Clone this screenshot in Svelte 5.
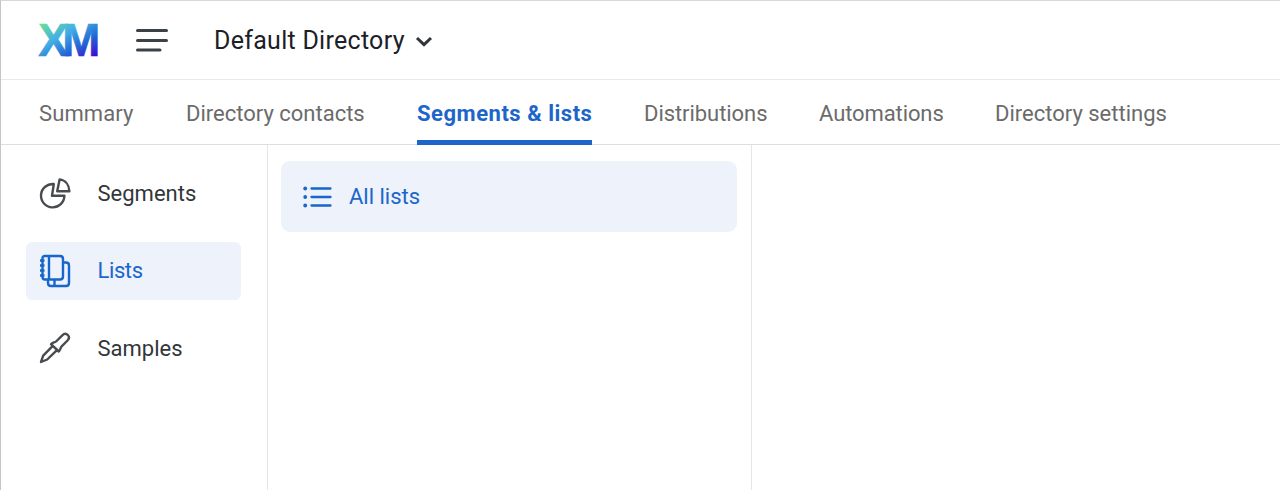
<script>
  const tabs = [
    { label: 'Summary', width: 95, spacing: 0.1 },
    { label: 'Directory contacts', width: 179, spacing: 0 },
    { label: 'Segments & lists', width: 175, spacing: 0.52, active: true },
    { label: 'Distributions', width: 123, spacing: -0.06 },
    { label: 'Automations', width: 124, spacing: -0.1 },
    { label: 'Directory settings', width: 173, spacing: 0 }
  ];
</script>

<div class="app">
  <header>
    <svg class="logo" width="68" height="44" viewBox="0 0 68 44" role="img" aria-label="XM">
      <defs>
        <linearGradient id="brand" gradientUnits="userSpaceOnUse" x1="2" y1="5" x2="32" y2="54">
          <stop offset="0" stop-color="#69e394" />
          <stop offset=".38" stop-color="#43aee6" />
          <stop offset=".68" stop-color="#246bd4" />
          <stop offset="1" stop-color="#3c08cf" />
        </linearGradient>
      </defs>
      <text x="0.2" y="37.500" textLength="62" lengthAdjust="spacing" fill="url(#brand)" stroke="url(#brand)" stroke-width=".7">XM</text>
    </svg>
    <svg class="menu" width="34" height="26" viewBox="0 0 34 26">
      <path d="M2.500 3.500H31.500M2.500 13.500H31.500M2.500 23H25" />
    </svg>
    <button class="directory">
      <span>Default Directory</span>
      <svg width="18" height="13" viewBox="0 0 18 13"><path d="M2 3L9 9.700L16 3" /></svg>
    </button>
  </header>

  <nav class="tabs">
    {#each tabs as tab}
      <button class="tab" class:active={tab.active} style="width:{tab.width}px;letter-spacing:{tab.spacing}px">{tab.label}</button>
    {/each}
  </nav>

  <main>
    <aside>
      <button class="item">
        <svg width="34" height="34" viewBox="0 0 34 34">
          <path d="M15.800 8A11.700 11.700 0 1 0 26.400 19.800H14ZM21.600 3.400L19.200 15.200H31.400C31.100 8.800 27.400 4.200 21.600 3.400Z" />
        </svg>
        <span>Segments</span>
      </button>
      <button class="item selected">
        <svg width="34" height="34" viewBox="0 0 34 34">
          <path d="M7 2H22Q25 2 25 5V22.500Q25 25.500 22 25.500H7Q4.500 25.500 4.500 23V4.500Q4.500 2 7 2ZM11 2V25.500M25.500 8.500H28Q31 8.500 31 11.500V29Q31 32 28 32H13Q10 32 10 29V26M16.500 26V32M2 6.500H6.500M2 11.500H6.500M2 16.500H6.500M2 21.500H6.500" />
        </svg>
        <span>Lists</span>
      </button>
      <button class="item">
        <svg width="34" height="34" viewBox="0 0 34 34">
          <path d="M14.800 14.800L5.200 24.700L3 31L9.200 28.500L19.200 18.800M13 13.200C14.800 11.200 16.800 11.800 18.600 10L24.300 4.300C26.200 2.400 28.300 2.600 29.800 4C31.300 5.500 31.300 7.700 29.500 9.500L23.900 15.100C22.200 16.800 22.700 18.500 20.800 20.500Z" />
        </svg>
        <span>Samples</span>
      </button>
    </aside>

    <section class="lists">
      <button class="all">
        <svg width="30" height="24" viewBox="0 0 30 24">
          <path d="M8.500 3.500H27.500M8.500 12H27.500M8.500 20.500H27.500" />
          <circle cx="2.200" cy="3.500" r="1.900" /><circle cx="2.200" cy="12" r="1.900" /><circle cx="2.200" cy="20.500" r="1.900" />
        </svg>
        <span>All lists</span>
      </button>
    </section>
    <section class="detail"></section>
  </main>
</div>

<style>
  :global(body) { margin: 0; background: #fff; }
  .app {
    box-sizing: border-box;
    height: 490px;
    display: flex;
    flex-direction: column;
    overflow: hidden;
    border-top: 1px solid #d8d8dc;
    border-left: 1px solid #c6c6c6;
    font-family: Roboto, "Liberation Sans", sans-serif;
    color: #32363a;
  }
  button {
    border: 0;
    margin: 0;
    padding: 0;
    background: none;
    font: inherit;
    color: inherit;
    text-align: left;
    white-space: nowrap;
  }
  svg { display: block; flex: none; fill: none; overflow: visible; }
  header {
    box-sizing: border-box;
    height: 79px;
    flex: none;
    display: flex;
    align-items: center;
    padding-left: 37px;
    border-bottom: 1px solid #e9e9e9;
  }
  .logo text { font: bold 45.5px "Liberation Sans", Arial, sans-serif; }
  .menu { margin-left: 29px; stroke: #3b4247; stroke-width: 3; stroke-linecap: round; }
  .directory { display: flex; align-items: center; margin-left: 45px; font-size: 25px; color: #1c2027; }
  .directory span { width: 193px; letter-spacing: 0.28px; }
  .directory svg { margin-left: 8px; margin-top: 3px; stroke: #32363a; stroke-width: 3; }
  .tabs {
    box-sizing: border-box;
    height: 65px;
    flex: none;
    display: flex;
    gap: 52px;
    padding-left: 38px;
    border-bottom: 1px solid #dfdfdf;
    font-size: 22px;
    color: #6b6b6b;
  }
  .tab { height: 65px; box-sizing: border-box; border-bottom: 5px solid transparent; padding-top: 6px; }
  .tab.active { font-weight: 700; color: #1c66ca; border-color: #1c66ca; }
  main { flex: 1; display: flex; font-size: 22px; }
  aside {
    box-sizing: border-box;
    width: 267px;
    padding: 19px 26px 0 25px;
    border-right: 1px solid #e6e6e6;
    display: flex;
    flex-direction: column;
    gap: 19.5px;
  }
  .item { display: flex; align-items: center; height: 58px; border-radius: 6px; padding-left: 12px; gap: 25.5px; }
  .item svg { stroke: #484b4f; stroke-width: 2.4; stroke-linejoin: round; }
  .selected, .all { background: #edf2fb; color: #1c66ca; }
  .selected span { letter-spacing: -0.4px; }
  .item.selected svg, .all svg { stroke: #1766cb; }
  .lists { box-sizing: border-box; width: 484px; padding: 16px 14px 0 13px; border-right: 1px solid #e6e6e6; }
  .all { display: flex; align-items: center; width: 100%; height: 71px; border-radius: 9px; padding-left: 22px; gap: 16px; }
  .all svg { stroke-width: 2.3; stroke-linecap: round; }
  .all circle { fill: #1766cb; stroke: none; }
  .detail { flex: 1; }
</style>
